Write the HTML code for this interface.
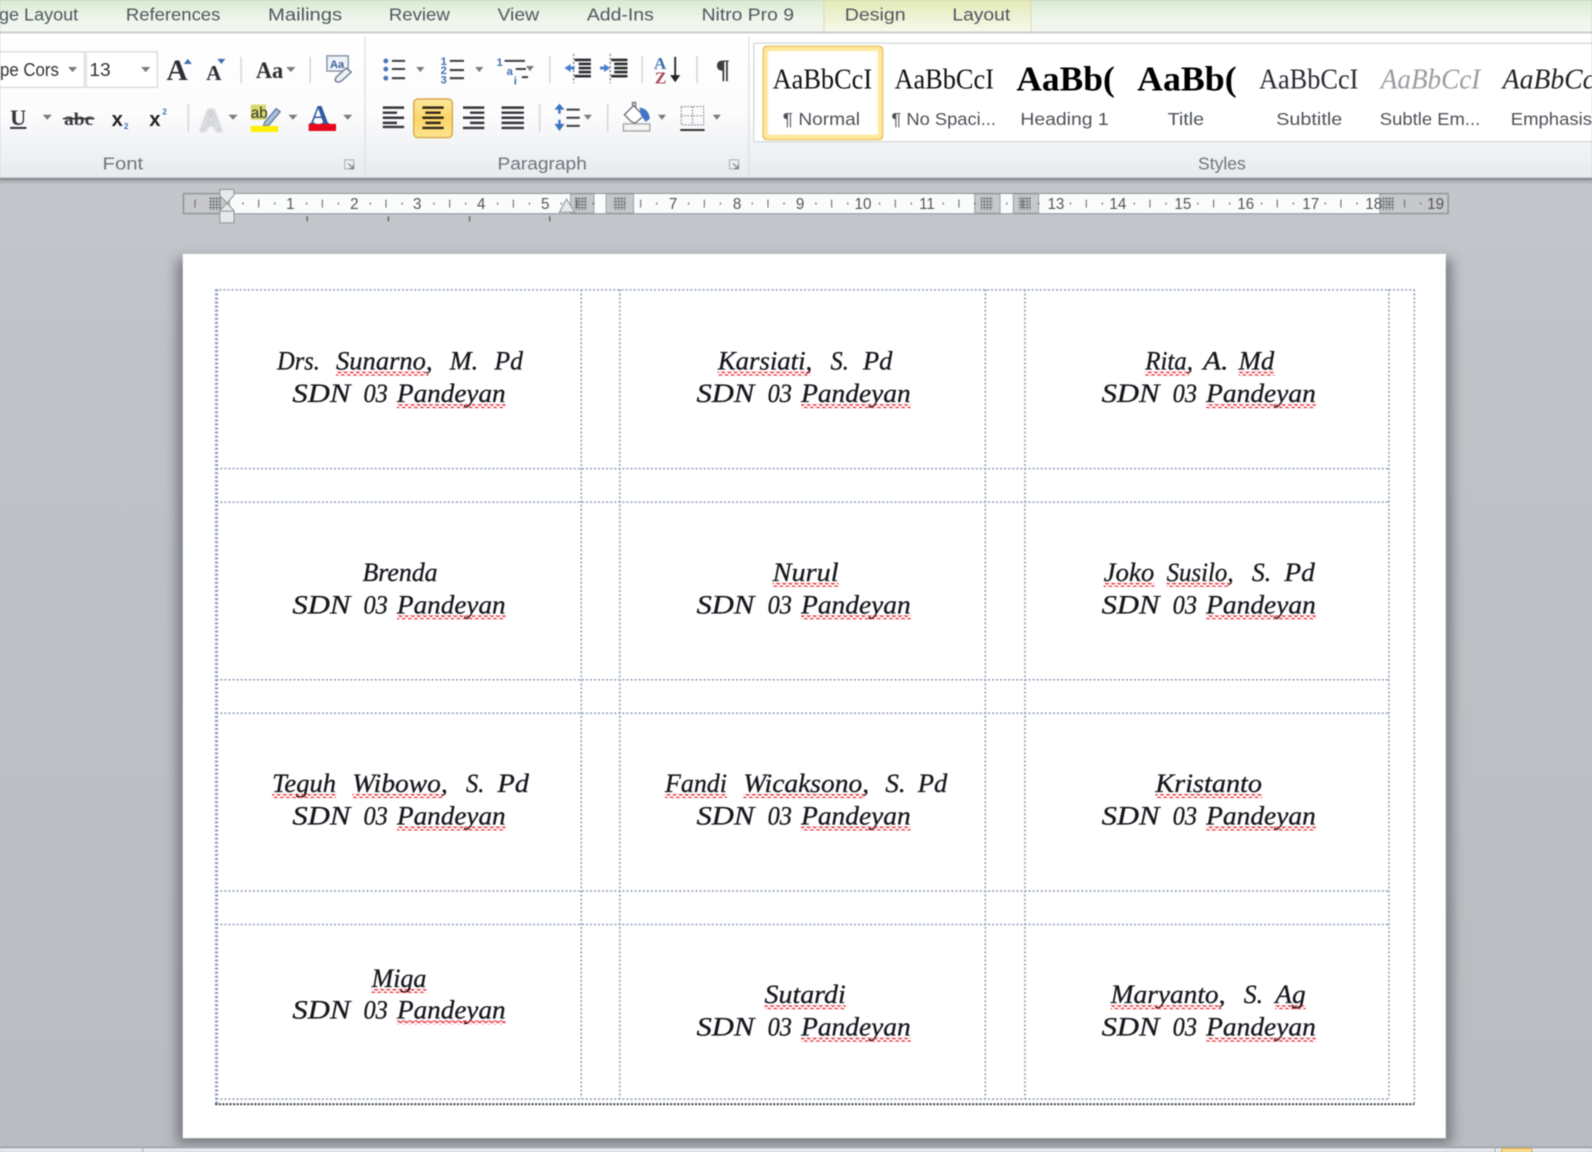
<!DOCTYPE html>
<html lang="en"><head><meta charset="utf-8"><title>Word labels</title>
<style>
html,body{margin:0;padding:0;width:1592px;height:1152px;overflow:hidden;background:#bbbec3}
svg{display:block;filter:blur(.4px)}
.tab{font:17px "Liberation Sans",sans-serif;fill:#50565e}
.grp{font:17px "Liberation Sans",sans-serif;fill:#6f747b}
.lab{font:17px "Liberation Sans",sans-serif;fill:#4d5258}
.st{font:28px "Liberation Serif",serif;fill:#111}
.sb{font:bold 34px "Liberation Serif",serif;fill:#000}
.r{font:15px "Liberation Sans",sans-serif;fill:#555;text-anchor:middle}
.c{font:italic 26px "Liberation Serif",serif;fill:#14171c;stroke:#14171c;stroke-width:.3}
</style></head><body>
<svg xmlns="http://www.w3.org/2000/svg" width="1592" height="1152" viewBox="0 0 1568 1134.6" preserveAspectRatio="none">
<defs>
<linearGradient id="bg" x1="0" y1="0" x2="0" y2="1"><stop offset="0" stop-color="#c9ccd1"/><stop offset=".3" stop-color="#bfc2c7"/><stop offset="1" stop-color="#b9bcc1"/></linearGradient>
<linearGradient id="tb" x1="0" y1="0" x2="0" y2="1"><stop offset="0" stop-color="#d7ead0"/><stop offset=".5" stop-color="#edf5ea"/><stop offset="1" stop-color="#f4f8f2"/></linearGradient>
<linearGradient id="ctx" x1="0" y1="0" x2="0" y2="1"><stop offset="0" stop-color="#e4eab8"/><stop offset="1" stop-color="#f8faee"/></linearGradient>
<linearGradient id="rb" x1="0" y1="0" x2="0" y2="1"><stop offset="0" stop-color="#fff"/><stop offset=".55" stop-color="#fcfcfd"/><stop offset="1" stop-color="#e7eaee"/></linearGradient>
<linearGradient id="hl" x1="0" y1="0" x2="0" y2="1"><stop offset="0" stop-color="#fde9a0"/><stop offset=".5" stop-color="#fdd667"/><stop offset="1" stop-color="#fee48e"/></linearGradient>
<pattern id="wv" width="6" height="4" patternUnits="userSpaceOnUse"><path d="M0 1.5Q1.5 -.6 3 1.5T6 1.5" fill="none" stroke="#e8222c" stroke-width="1.300" transform="translate(0 .6)"/></pattern>
<pattern id="grd" width="3" height="3" patternUnits="userSpaceOnUse"><path d="M0 .5H3M.5 0V3" stroke="#6d7076" stroke-width=".8"/></pattern>
<filter id="sh" x="-5%" y="-5%" width="110%" height="110%"><feGaussianBlur stdDeviation="6"/></filter>
<filter id="gl" x="-30%" y="-30%" width="160%" height="160%"><feGaussianBlur stdDeviation="1.1"/></filter>
</defs>

<rect width="1568" height="1135" fill="url(#bg)"/>
<!-- tabs -->
<rect width="1568" height="33" fill="url(#tb)"/>
<rect x="811" width="205" height="33" fill="url(#ctx)"/>
<path d="M811.5 0V32M1015.5 0V32" stroke="#d9dcae"/>
<rect y="31" width="1568" height="2.5" fill="#c9ced3"/>
<text class="tab" x="-1" y="20" textLength="78" lengthAdjust="spacingAndGlyphs">ge Layout</text>
<text class="tab" x="124" y="20" textLength="93" lengthAdjust="spacingAndGlyphs">References</text>
<text class="tab" x="264" y="20" textLength="73" lengthAdjust="spacingAndGlyphs">Mailings</text>
<text class="tab" x="383" y="20" textLength="60" lengthAdjust="spacingAndGlyphs">Review</text>
<text class="tab" x="490" y="20" textLength="41" lengthAdjust="spacingAndGlyphs">View</text>
<text class="tab" x="578" y="20" textLength="66" lengthAdjust="spacingAndGlyphs">Add-Ins</text>
<text class="tab" x="691" y="20" textLength="91" lengthAdjust="spacingAndGlyphs">Nitro Pro 9</text>
<text class="tab" x="832" y="20" textLength="60" lengthAdjust="spacingAndGlyphs">Design</text>
<text class="tab" x="938" y="20" textLength="57" lengthAdjust="spacingAndGlyphs">Layout</text>

<!-- ribbon body -->
<rect y="33" width="1568" height="143" fill="url(#rb)"/>
<rect y="175" width="1568" height="3" fill="#8f9398"/>
<rect y="178" width="1568" height="3" fill="#b4b7bc"/>
<path d="M359.5 36V174M737.5 36V174" stroke="#dfe2e6" stroke-width="1.4"/>

<!-- font boxes -->
<rect x="-3" y="51" width="86" height="35" fill="#fff" stroke="#d4d7db" stroke-width="1.2"/>
<rect x="85" y="51" width="70" height="35" fill="#fff" stroke="#d4d7db" stroke-width="1.2"/>
<text x="0" y="75" font-family="Liberation Sans" font-size="18" fill="#333" textLength="58" lengthAdjust="spacingAndGlyphs">pe Cors</text>
<text x="88" y="75" font-family="Liberation Sans" font-size="18" fill="#333" textLength="21" lengthAdjust="spacingAndGlyphs">13</text>
<path d="M67 66h9l-4.500 5zM139 66h9l-4.500 5zM282 66h9l-4.500 5zM42 113h9l-4.500 5zM225 113h9l-4.500 5zM284 113h9l-4.500 5zM338 113h9l-4.500 5zM410 66h8l-4 5zM468 66h8l-4 5zM518 65h8l-4 5zM575 113h8l-4 5zM648 113h8l-4 5zM702 113h8l-4 5z" fill="#777b80"/>
<text x="164" y="79" font-family="Liberation Serif" font-weight="bold" font-size="29" fill="#2c2f33">A</text>
<path d="M181 63l4-5 4 5z" fill="#3f6fae"/>
<text x="203" y="79" font-family="Liberation Serif" font-weight="bold" font-size="21" fill="#2c2f33">A</text>
<path d="M214 58h8l-4 5z" fill="#3f6fae"/>
<text x="252" y="77" font-family="Liberation Serif" font-weight="bold" font-size="23" fill="#2c2f33" textLength="27" lengthAdjust="spacingAndGlyphs">Aa</text>
<path d="M237.500 56V82M305.500 56V82M185.500 102V130M541.500 55V82M632.500 55V82M686.500 55V82M531.500 102V130M598.500 102V130" stroke="#d3d6da" stroke-width="1.500"/>
<!-- format painter/clear -->
<rect x="322" y="55" width="21" height="15" fill="#eef2f8" stroke="#7c8aa3" stroke-width="1.300"/>
<text x="325" y="67" font-family="Liberation Sans" font-weight="bold" font-size="11" fill="#3c5f96">Aa</text>
<path d="M331 76l10-9 5 4-10 9q-4 2-6-1z" fill="#eef1f5" stroke="#6e7e95" stroke-width="1.400"/>

<!-- row 2 font -->
<text x="10" y="123" font-family="Liberation Serif" font-weight="bold" font-size="22" fill="#33363a">U</text><rect x="10" y="125" width="16" height="2" fill="#33363a"/>
<text x="63" y="123" font-family="Liberation Serif" font-weight="bold" font-size="18" fill="#3a3d40" textLength="29" lengthAdjust="spacingAndGlyphs">abc</text><rect x="62" y="116" width="31" height="1.600" fill="#333"/>
<text x="110" y="124" font-family="Liberation Sans" font-weight="bold" font-size="20" fill="#222">x</text><text x="122" y="127" font-family="Liberation Sans" font-weight="bold" font-size="8" fill="#3f6fae">2</text>
<text x="147" y="124" font-family="Liberation Sans" font-weight="bold" font-size="20" fill="#222">x</text><text x="160" y="113" font-family="Liberation Sans" font-weight="bold" font-size="8" fill="#3f6fae">2</text>
<text x="197" y="129" font-family="Liberation Sans" font-weight="bold" font-size="30" fill="#e8eaec" stroke="#c4c7cb" stroke-width="1.800" filter="url(#gl)">A</text>
<rect x="247" y="103" width="15" height="15" fill="#d7d96e"/>
<text x="247" y="116" font-family="Liberation Sans" font-size="15" fill="#333">ab</text>
<path d="M261 120l11-13 4 3-11 13-6 2z" fill="#a9bedb" stroke="#5c7396" stroke-width="1.200"/>
<rect x="247" y="124" width="27" height="6" fill="#fdf000"/>
<text x="305" y="122" font-family="Liberation Serif" font-weight="bold" font-size="27" fill="#2d5a9f">A</text>
<rect x="304" y="122" width="27" height="7" fill="#e8061a"/>

<!-- launchers -->
<path d="M339.500 157.500h9v9h-9z" fill="none" stroke="#a8acb2"/><path d="M343 161l5 5m0-4v4h-4" fill="none" stroke="#70747a"/>
<path d="M718.500 157.500h9v9h-9z" fill="none" stroke="#a8acb2"/><path d="M722 161l5 5m0-4v4h-4" fill="none" stroke="#70747a"/>
<text class="grp" x="101" y="167" textLength="40" lengthAdjust="spacingAndGlyphs">Font</text>
<text class="grp" x="490" y="167" textLength="88" lengthAdjust="spacingAndGlyphs">Paragraph</text>
<text class="grp" x="1180" y="167" textLength="47" lengthAdjust="spacingAndGlyphs">Styles</text>

<!-- bullets -->
<g fill="#4b76b8"><circle cx="380" cy="60" r="2.400"/><circle cx="380" cy="68" r="2.400"/><circle cx="380" cy="77" r="2.400"/></g>
<path d="M386 60h13M386 68h13M386 77h13" stroke="#3c3f44" stroke-width="2"/>
<g font-family="Liberation Sans" font-weight="bold" font-size="11" fill="#3f6fae"><text x="434" y="64">1</text><text x="434" y="73">2</text><text x="434" y="82">3</text><text x="489" y="65">1</text><text x="499" y="74">a</text><text x="506" y="83">i</text></g>
<path d="M443 60h14M443 69h14M443 77h14" stroke="#3c3f44" stroke-width="2"/>
<path d="M497 60h20M508 68h10M514 76h6" stroke="#3c3f44" stroke-width="2"/>
<!-- indents -->
<path d="M566 59h16M570 63h12M570 67h12M570 71h12M566 75h16" stroke="#2b2e32" stroke-width="2.600"/>
<path d="M565 53V82" stroke="#555" stroke-width="1" stroke-dasharray="2 2"/>
<path d="M556 67l6-4v2.500h4v3h-4v2.500z" fill="#4a82d0"/>
<path d="M602 59h16M605 63h13M605 67h13M605 71h13M602 75h16" stroke="#2b2e32" stroke-width="2.600"/>
<path d="M601 53V82" stroke="#555" stroke-width="1" stroke-dasharray="2 2"/>
<path d="M601 67l-6-4v2.500h-4v3h4v2.500z" fill="#4a82d0"/>
<!-- sort -->
<text x="644" y="68" font-family="Liberation Serif" font-weight="bold" font-size="17" fill="#3f6fae">A</text>
<text x="645" y="82" font-family="Liberation Serif" font-weight="bold" font-size="17" fill="#a8485a">Z</text>
<path d="M665 56V76" stroke="#222" stroke-width="1.800"/><path d="M660 74h10l-5 7z" fill="#222"/>
<text x="705" y="77" font-family="Liberation Serif" font-weight="bold" font-size="26" fill="#3b3e42">¶</text>

<!-- align -->
<path d="M377 107h21M377 112h14M377 117h21M377 122h14M377 126h21" stroke="#33363a" stroke-width="2.400" transform="translate(0 -1)"/>
<rect x="407.500" y="97.500" width="38" height="38" rx="4" fill="url(#hl)" stroke="#d7a84c" stroke-width="1.400"/>
<path d="M416 106h21M419 111h15M416 116h21M419 121h15M416 126h21" stroke="#33291a" stroke-width="2.400"/>
<path d="M456 106h21M463 111h14M456 116h21M463 121h14M456 126h21" stroke="#33363a" stroke-width="2.400"/>
<path d="M494 106h22M494 111h22M494 116h22M494 121h22M494 126h22" stroke="#33363a" stroke-width="2.400"/>
<!-- line spacing -->
<path d="M551 112V104M551 118V127" stroke="#3d74c0" stroke-width="2.400"/>
<path d="M546 108l5-6 5 6zM546 122l5 7 5-7z" fill="#3d74c0"/>
<path d="M558 108h13M558 116h13M558 124h13" stroke="#3c3f44" stroke-width="2"/>
<!-- shading -->
<rect x="614" y="122" width="26" height="7" fill="#f4f4f2" stroke="#9c9fa3" stroke-width="1.200"/>
<path d="M615 113l9-9 10 10-8 7q-3 0-5-2z" fill="#fff" stroke="#6b6f75" stroke-width="1.300"/>
<path d="M623 104v-3h3v5" fill="none" stroke="#6b6f75" stroke-width="1.300"/>
<path d="M630 106q9 1 10 11l-4 3-5-7z" fill="#3f75c4"/>
<!-- borders -->
<path d="M671 105h22v18h-22zM682 105v18M671 114h22" fill="none" stroke="#7c7f84" stroke-width="1.100" stroke-dasharray="1.500 1.500"/>
<path d="M670 128h24" stroke="#333" stroke-width="2"/>

<!-- styles gallery -->
<rect x="742.500" y="42.500" width="840" height="97" fill="#fff" stroke="#d4d8dc" stroke-width="1.300"/>
<rect x="752" y="46" width="117" height="91" rx="3" fill="#fff9d9" stroke="#eab84e" stroke-width="2"/>
<rect x="757" y="51" width="107" height="81" fill="#fff"/>
<rect x="754" y="48" width="113" height="87" rx="2" fill="none" stroke="#ffe79b" stroke-width="4"/>
<text class="st" x="761" y="87" textLength="98" lengthAdjust="spacingAndGlyphs">AaBbCcI</text>
<text class="st" x="881" y="87" textLength="98" lengthAdjust="spacingAndGlyphs">AaBbCcI</text>
<text class="sb" x="1001" y="89" textLength="97" lengthAdjust="spacingAndGlyphs">AaBb(</text>
<text class="sb" x="1120" y="89" textLength="98" lengthAdjust="spacingAndGlyphs">AaBb(</text>
<text class="st" x="1240" y="87" textLength="98" lengthAdjust="spacingAndGlyphs" style="fill:#2a2d33">AaBbCcI</text>
<text class="st" x="1360" y="87" textLength="98" lengthAdjust="spacingAndGlyphs" style="fill:#9a9ca0;font-style:italic">AaBbCcI</text>
<text class="st" x="1480" y="87" textLength="100" lengthAdjust="spacingAndGlyphs" style="fill:#222;font-style:italic">AaBbCcI</text>
<text class="lab" x="771" y="123" textLength="76" lengthAdjust="spacingAndGlyphs">¶ Normal</text>
<text class="lab" x="878" y="123" textLength="103" lengthAdjust="spacingAndGlyphs">¶ No Spaci...</text>
<text class="lab" x="1005" y="123" textLength="87" lengthAdjust="spacingAndGlyphs">Heading 1</text>
<text class="lab" x="1150" y="123" textLength="36" lengthAdjust="spacingAndGlyphs">Title</text>
<text class="lab" x="1257" y="123" textLength="65" lengthAdjust="spacingAndGlyphs">Subtitle</text>
<text class="lab" x="1359" y="123" textLength="99" lengthAdjust="spacingAndGlyphs">Subtle Em...</text>
<text class="lab" x="1488" y="123" textLength="80" lengthAdjust="spacingAndGlyphs">Emphasis</text>

<!-- ruler -->
<rect x="180.500" y="190.500" width="1246" height="20" fill="#fafbfb" stroke="#8f9398"/>
<g fill="#c6c8cc" stroke="#8f9398" stroke-width=".8">
<rect x="181" y="191" width="45" height="19"/><rect x="562" y="191" width="23" height="19"/><rect x="597" y="191" width="27" height="19"/><rect x="960" y="191" width="25" height="19"/><rect x="998" y="191" width="25" height="19"/><rect x="1359" y="191" width="67" height="19"/></g>
<g fill="url(#grd)"><rect x="206" y="194" width="12" height="13"/><rect x="566" y="194" width="12" height="13"/><rect x="604" y="194" width="12" height="13"/><rect x="966" y="194" width="12" height="13"/><rect x="1003" y="194" width="12" height="13"/><rect x="1361" y="194" width="12" height="13"/></g>
<path d="M191.600 200.500H1420" stroke="#666" stroke-width="8" stroke-dasharray="1 61.700"/>
<path d="M238.700 200.500H1410" stroke="#666" stroke-width="1.800" stroke-dasharray="1.200 30.150"/>
<g class="r">
<text class="r" x="286" y="206">1</text><text class="r" x="349" y="206">2</text><text class="r" x="411" y="206">3</text><text class="r" x="474" y="206">4</text><text class="r" x="537" y="206">5</text><text class="r" x="663" y="206">7</text><text class="r" x="726" y="206">8</text><text class="r" x="788" y="206">9</text><text class="r" x="850" y="206">10</text><text class="r" x="913" y="206">11</text><text class="r" x="1040" y="206">13</text><text class="r" x="1101" y="206">14</text><text class="r" x="1165" y="206">15</text><text class="r" x="1227" y="206">16</text><text class="r" x="1291" y="206">17</text><text class="r" x="1353" y="206">18</text><text class="r" x="1414" y="206">19</text>
</g>
<path d="M216.500 186.500h14v6l-7 7.500 7 7.500v12h-14v-12l7-7.500-7-7.500z" fill="#e6e8eb" stroke="#8f9398"/>
<path d="M216.500 208h14" stroke="#8f9398"/>
<path d="M551 209l7-13 8 13z" fill="#e6e8eb" stroke="#8f9398"/>
<path d="M302.500 213v5M382.500 213v5M462.500 213v5M541.500 213v5" stroke="#555" stroke-width="1.200"/>

<!-- page -->
<rect x="174" y="255" width="1256" height="872" fill="#63676c" opacity=".75" filter="url(#sh)"/>
<rect x="180" y="250" width="1244" height="871" fill="#fff"/>

<!-- table gridlines -->
<g stroke="#8d9db6" stroke-width="1.500" stroke-dasharray="2 2" fill="none">
<path d="M212 285.500H1393M213 461.500H1368M213 494.500H1368M213 669.500H1368M213 702.500H1368M213 877.500H1368M213 910.500H1368M213 1082.500H1368"/>
<path d="M212.500 285V1087M214 285V1087M572.500 285V1082M610.500 285V1082M970.500 285V1082M1009.500 285V1082M1368 285V1082M1393 285V1087"/>
</g>
<path d="M212 1087.500H1393" stroke="#333" stroke-width="1.800" stroke-dasharray="2 1.500"/>

<!-- labels -->
<g class="lb">
<text class="c" x="273" y="364" textLength="42" lengthAdjust="spacingAndGlyphs">Drs.</text><text class="c" x="331" y="364" textLength="95" lengthAdjust="spacingAndGlyphs">Sunarno,</text><text class="c" x="443" y="364" textLength="28" lengthAdjust="spacingAndGlyphs">M.</text><text class="c" x="487" y="364" textLength="28" lengthAdjust="spacingAndGlyphs">Pd</text>
<text class="c" x="707" y="364" textLength="93" lengthAdjust="spacingAndGlyphs">Karsiati,</text><text class="c" x="818" y="364" textLength="18" lengthAdjust="spacingAndGlyphs">S.</text><text class="c" x="850" y="364" textLength="29" lengthAdjust="spacingAndGlyphs">Pd</text>
<text class="c" x="1128" y="364" textLength="47" lengthAdjust="spacingAndGlyphs">Rita,</text><text class="c" x="1185" y="364" textLength="25" lengthAdjust="spacingAndGlyphs">A.</text><text class="c" x="1220" y="364" textLength="35" lengthAdjust="spacingAndGlyphs">Md</text>

<text class="c" x="357" y="572" textLength="74" lengthAdjust="spacingAndGlyphs">Brenda</text>
<text class="c" x="761" y="572" textLength="65" lengthAdjust="spacingAndGlyphs">Nurul</text>
<text class="c" x="1087" y="572" textLength="50" lengthAdjust="spacingAndGlyphs">Joko</text><text class="c" x="1149" y="572" textLength="66" lengthAdjust="spacingAndGlyphs">Susilo,</text><text class="c" x="1233" y="572" textLength="19" lengthAdjust="spacingAndGlyphs">S.</text><text class="c" x="1265" y="572" textLength="30" lengthAdjust="spacingAndGlyphs">Pd</text>

<text class="c" x="268" y="780" textLength="63" lengthAdjust="spacingAndGlyphs">Teguh</text><text class="c" x="347" y="780" textLength="94" lengthAdjust="spacingAndGlyphs">Wibowo,</text><text class="c" x="459" y="780" textLength="18" lengthAdjust="spacingAndGlyphs">S.</text><text class="c" x="490" y="780" textLength="31" lengthAdjust="spacingAndGlyphs">Pd</text>
<text class="c" x="655" y="780" textLength="61" lengthAdjust="spacingAndGlyphs">Fandi</text><text class="c" x="732" y="780" textLength="124" lengthAdjust="spacingAndGlyphs">Wicaksono,</text><text class="c" x="872" y="780" textLength="20" lengthAdjust="spacingAndGlyphs">S.</text><text class="c" x="904" y="780" textLength="29" lengthAdjust="spacingAndGlyphs">Pd</text>
<text class="c" x="1138" y="780" textLength="105" lengthAdjust="spacingAndGlyphs">Kristanto</text>

<text class="c" x="366" y="972" textLength="54" lengthAdjust="spacingAndGlyphs">Miga</text>
<text class="c" x="753" y="988" textLength="80" lengthAdjust="spacingAndGlyphs">Sutardi</text>
<text class="c" x="1094" y="988" textLength="113" lengthAdjust="spacingAndGlyphs">Maryanto,</text><text class="c" x="1225" y="988" textLength="19" lengthAdjust="spacingAndGlyphs">S.</text><text class="c" x="1256" y="988" textLength="30" lengthAdjust="spacingAndGlyphs">Ag</text>

<!-- SDN lines -->
<text class="c" x="288" y="396" textLength="57" lengthAdjust="spacingAndGlyphs">SDN</text><text class="c" x="358" y="396" textLength="24" lengthAdjust="spacingAndGlyphs">03</text><text class="c" x="391" y="396" textLength="107" lengthAdjust="spacingAndGlyphs">Pandeyan</text>
<text class="c" x="686" y="396" textLength="57" lengthAdjust="spacingAndGlyphs">SDN</text><text class="c" x="756" y="396" textLength="24" lengthAdjust="spacingAndGlyphs">03</text><text class="c" x="789" y="396" textLength="108" lengthAdjust="spacingAndGlyphs">Pandeyan</text>
<text class="c" x="1085" y="396" textLength="57" lengthAdjust="spacingAndGlyphs">SDN</text><text class="c" x="1155" y="396" textLength="24" lengthAdjust="spacingAndGlyphs">03</text><text class="c" x="1188" y="396" textLength="108" lengthAdjust="spacingAndGlyphs">Pandeyan</text>
<text class="c" x="288" y="604" textLength="57" lengthAdjust="spacingAndGlyphs">SDN</text><text class="c" x="358" y="604" textLength="24" lengthAdjust="spacingAndGlyphs">03</text><text class="c" x="391" y="604" textLength="107" lengthAdjust="spacingAndGlyphs">Pandeyan</text>
<text class="c" x="686" y="604" textLength="57" lengthAdjust="spacingAndGlyphs">SDN</text><text class="c" x="756" y="604" textLength="24" lengthAdjust="spacingAndGlyphs">03</text><text class="c" x="789" y="604" textLength="108" lengthAdjust="spacingAndGlyphs">Pandeyan</text>
<text class="c" x="1085" y="604" textLength="57" lengthAdjust="spacingAndGlyphs">SDN</text><text class="c" x="1155" y="604" textLength="24" lengthAdjust="spacingAndGlyphs">03</text><text class="c" x="1188" y="604" textLength="108" lengthAdjust="spacingAndGlyphs">Pandeyan</text>
<text class="c" x="288" y="812" textLength="57" lengthAdjust="spacingAndGlyphs">SDN</text><text class="c" x="358" y="812" textLength="24" lengthAdjust="spacingAndGlyphs">03</text><text class="c" x="391" y="812" textLength="107" lengthAdjust="spacingAndGlyphs">Pandeyan</text>
<text class="c" x="686" y="812" textLength="57" lengthAdjust="spacingAndGlyphs">SDN</text><text class="c" x="756" y="812" textLength="24" lengthAdjust="spacingAndGlyphs">03</text><text class="c" x="789" y="812" textLength="108" lengthAdjust="spacingAndGlyphs">Pandeyan</text>
<text class="c" x="1085" y="812" textLength="57" lengthAdjust="spacingAndGlyphs">SDN</text><text class="c" x="1155" y="812" textLength="24" lengthAdjust="spacingAndGlyphs">03</text><text class="c" x="1188" y="812" textLength="108" lengthAdjust="spacingAndGlyphs">Pandeyan</text>
<text class="c" x="288" y="1003" textLength="57" lengthAdjust="spacingAndGlyphs">SDN</text><text class="c" x="358" y="1003" textLength="24" lengthAdjust="spacingAndGlyphs">03</text><text class="c" x="391" y="1003" textLength="107" lengthAdjust="spacingAndGlyphs">Pandeyan</text>
<text class="c" x="686" y="1020" textLength="57" lengthAdjust="spacingAndGlyphs">SDN</text><text class="c" x="756" y="1020" textLength="24" lengthAdjust="spacingAndGlyphs">03</text><text class="c" x="789" y="1020" textLength="108" lengthAdjust="spacingAndGlyphs">Pandeyan</text>
<text class="c" x="1085" y="1020" textLength="57" lengthAdjust="spacingAndGlyphs">SDN</text><text class="c" x="1155" y="1020" textLength="24" lengthAdjust="spacingAndGlyphs">03</text><text class="c" x="1188" y="1020" textLength="108" lengthAdjust="spacingAndGlyphs">Pandeyan</text>
</g>

<!-- spelling squiggles -->
<g fill="url(#wv)">
<rect x="331" y="366" width="91" height="4"/><rect x="707" y="366" width="91" height="4"/><rect x="1128" y="366" width="43" height="4"/><rect x="1220" y="366" width="35" height="4"/>
<rect x="761" y="574" width="65" height="4"/><rect x="1087" y="574" width="50" height="4"/><rect x="1149" y="574" width="62" height="4"/>
<rect x="268" y="782" width="63" height="4"/><rect x="347" y="782" width="90" height="4"/><rect x="655" y="782" width="61" height="4"/><rect x="732" y="782" width="120" height="4"/><rect x="1138" y="782" width="105" height="4"/>
<rect x="366" y="974" width="54" height="4"/><rect x="753" y="990" width="80" height="4"/><rect x="1094" y="990" width="109" height="4"/><rect x="1256" y="990" width="30" height="4"/>
<rect x="391" y="398" width="107" height="4"/><rect x="789" y="398" width="108" height="4"/><rect x="1188" y="398" width="108" height="4"/>
<rect x="391" y="606" width="107" height="4"/><rect x="789" y="606" width="108" height="4"/><rect x="1188" y="606" width="108" height="4"/>
<rect x="391" y="814" width="107" height="4"/><rect x="789" y="814" width="108" height="4"/><rect x="1188" y="814" width="108" height="4"/>
<rect x="391" y="1005" width="107" height="4"/><rect x="789" y="1022" width="108" height="4"/><rect x="1188" y="1022" width="108" height="4"/>
</g>

<!-- status bar -->
<rect y="1129" width="1568" height="2" fill="#a4a7ac"/>
<rect y="1131" width="1568" height="4" fill="#e6e9ee"/>
<path d="M140.500 1131V1135M1472.500 1131V1135" stroke="#a8abb0"/>
<rect x="1479" y="1131" width="30" height="6" rx="2" fill="#fde08a" stroke="#d7a84c"/>
</svg>
</body></html>
